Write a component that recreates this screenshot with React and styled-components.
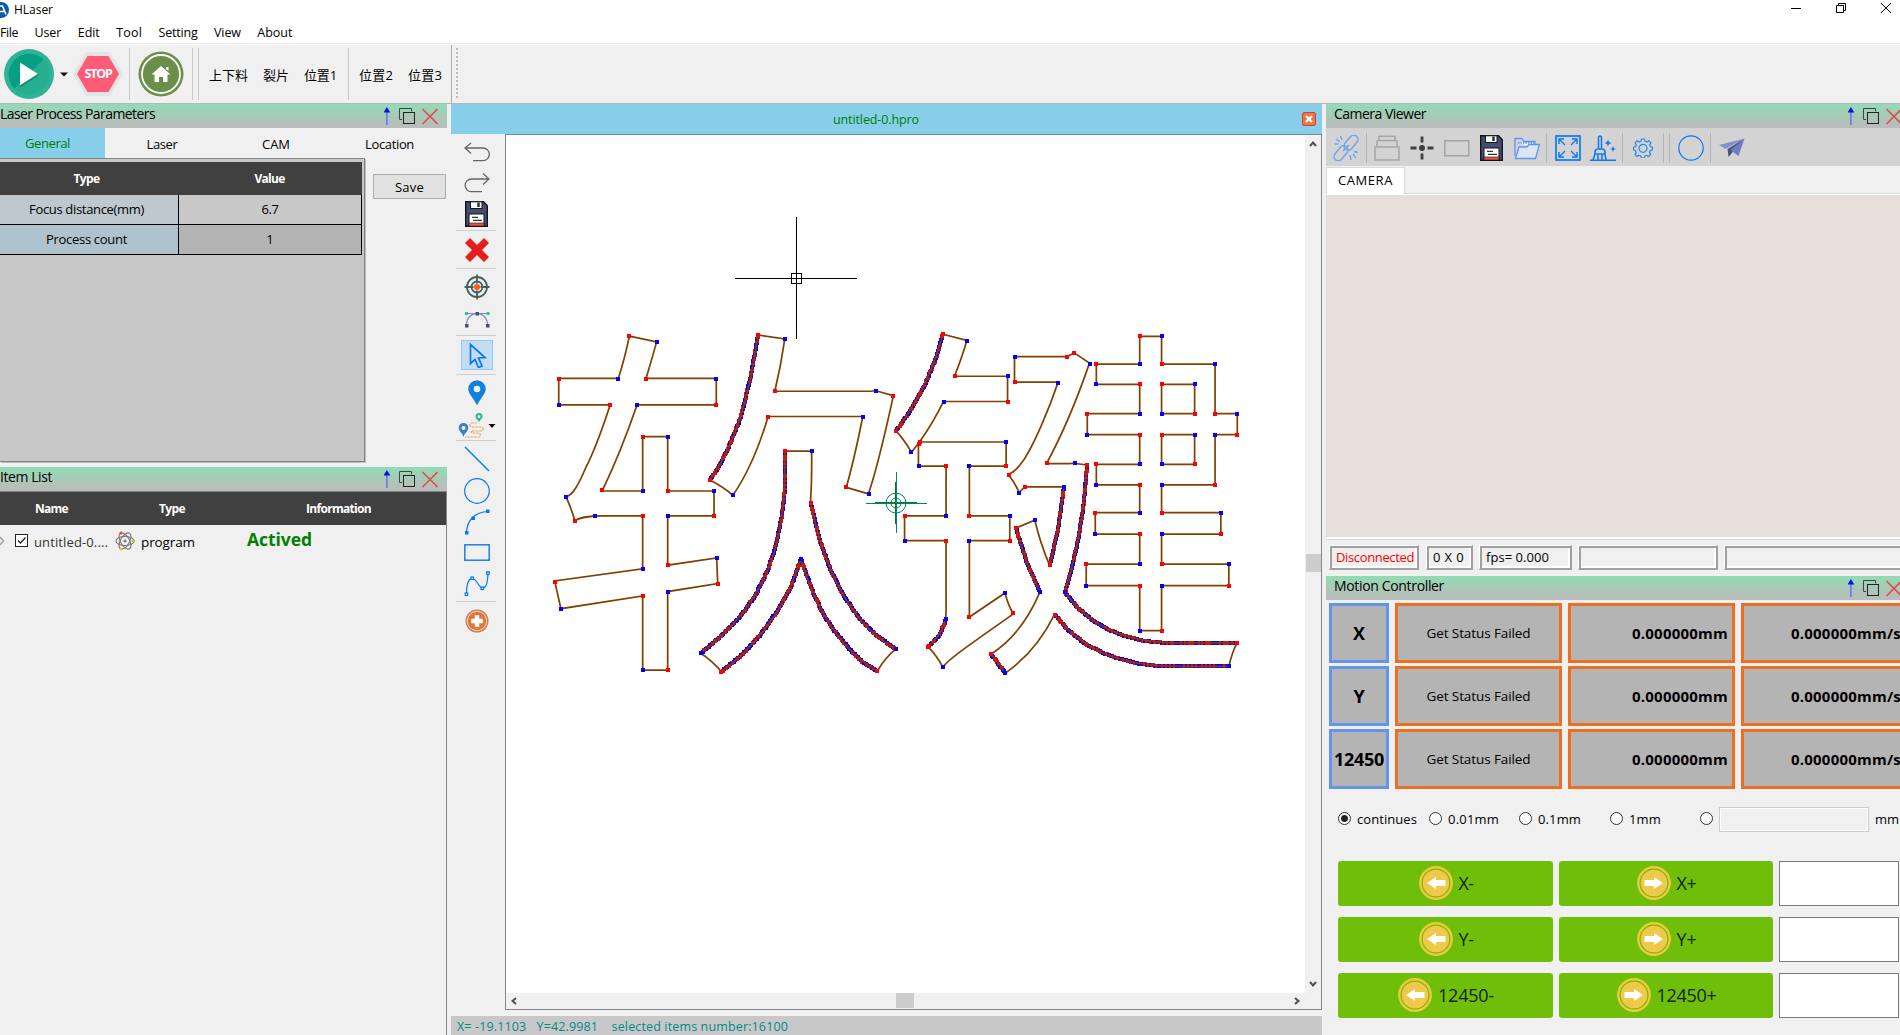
import React, { useLayoutEffect, useRef, useState } from "react";
import styled, { createGlobalStyle, css } from "styled-components";

const Global = createGlobalStyle`
  * { box-sizing: border-box; }
  body { margin: 0; background: #f0f0f0; overflow: hidden; }
  #root { font-family: "Open Sans", "Noto Sans CJK SC", sans-serif; color: #000; }
  svg { display: block; flex: none; }
`;

/* ---------- text ---------- */

const Label = styled.span`
  display: inline-block;
  flex: none;
  white-space: pre;
  font-size: ${(p) => p.$size || 13}px;
  font-weight: ${(p) => (p.$bold ? 700 : 400)};
  color: ${(p) => p.$color || "inherit"};
  line-height: 1.3;
`;

/* Spreads the letters so that the label fills the given width. */
function T({ w, size, bold, color, children }) {
  const ref = useRef(null);
  const [spacing, setSpacing] = useState(0);
  useLayoutEffect(() => {
    if (!w) return;
    const natural = ref.current.getBoundingClientRect().width;
    setSpacing((w - natural) / children.length);
  }, []);
  return (
    <Label ref={ref} $size={size} $bold={bold} $color={color} style={{ letterSpacing: spacing }}>
      {children}
    </Label>
  );
}

/* ---------- frame ---------- */

const Window = styled.div`
  width: 1900px;
  height: 1035px;
  display: flex;
  flex-direction: column;
  overflow: hidden;
  background: #f0f0f0;
`;

const TitleBar = styled.header`
  height: 20px;
  flex: none;
  background: #fff;
  display: flex;
  align-items: center;
  gap: 5px;
`;

const Spacer = styled.div`
  flex: 1;
`;

const WindowButtons = styled.div`
  display: flex;
  align-items: center;
  gap: 35px;
  padding: 0 9px 4px 0;
`;

const MenuBar = styled.nav`
  height: 24px;
  flex: none;
  background: #fff;
  border-bottom: 1px solid #e9e9e9;
  display: flex;
  align-items: center;
  gap: 16.4px;
  padding-top: 3px;
`;

const MainToolbar = styled.div`
  height: 60px;
  flex: none;
  border-top: 1px solid #fcfcfc;
  border-bottom: 1px solid #b8b8b8;
  display: flex;
  align-items: center;
`;

const Actions = styled.div`
  width: 452px;
  height: 59px;
  border-right: 1px solid #a9a9a9;
  display: flex;
  align-items: center;
`;

const ToolItem = styled.div`
  margin-left: ${(p) => p.$gap}px;
  flex: none;
`;

const VLine = styled.i`
  flex: none;
  width: 1px;
  height: ${(p) => p.$h || 52}px;
  margin-left: ${(p) => p.$gap || 0}px;
  background: ${(p) => (p.$h ? "#b4b4b4" : "#c9c9c9")};
`;

const Grip = styled.i`
  width: 2px;
  height: 52px;
  margin-left: 4px;
  background: repeating-linear-gradient(#bdbdbd 0 2px, transparent 2px 4px);
`;

const Body = styled.main`
  flex: 1;
  min-height: 0;
  display: grid;
  grid-template-columns: 447px 871px 585px;
  column-gap: 4px;
`;

const Column = styled.section`
  display: flex;
  flex-direction: column;
  min-height: 0;
`;

const DockHeader = styled.div`
  height: 24px;
  flex: none;
  display: flex;
  align-items: center;
  padding: 0 9px 0 ${(p) => p.$pad || 0}px;
  background: linear-gradient(#8fdcb5, #a9c9b6 50%, #bbb);
  & > span { margin-top: -4px; }
`;

/* ---------- laser process parameters ---------- */

const Tabs = styled.div`
  display: flex;
  height: 30px;
  flex: none;
`;

const Tab = styled.div`
  width: ${(p) => p.$w}px;
  display: flex;
  align-items: center;
  justify-content: center;
  background: ${(p) => (p.$on ? "#87ceeb" : "transparent")};
  color: ${(p) => (p.$on ? "#008000" : "#000")};
  padding: ${(p) => (p.$on ? "0 10px 0 0" : "2px 0 0 1px")};
`;

const ParamsBody = styled.div`
  display: flex;
  height: 309px;
  flex: none;
  align-items: flex-start;
`;

const ParamsFrame = styled.div`
  width: 365px;
  height: 304px;
  background: #c8c8c8;
  border: solid #838383;
  border-width: 1px 1px 1px 0;
  box-shadow: 1px 1px 0 #c0c0c0;
  padding: 3px 2px 0 0;
`;

const HeadRow = styled.div`
  height: ${(p) => p.$h}px;
  display: grid;
  grid-template-columns: ${(p) => p.$cols};
  background: #404040;
  color: #fff;
  align-items: center;
  justify-items: center;
`;

const ParamRow = styled.div`
  display: grid;
  grid-template-columns: 179px 183px;
  height: 30px;
`;

const ParamCell = styled.div`
  display: flex;
  align-items: center;
  justify-content: center;
  background: ${(p) => p.$bg};
  border-right: 1px solid #000;
  border-bottom: 1px solid #000;
  padding-right: ${(p) => (p.$head ? 5 : 0)}px;
`;

const SaveButton = styled.button`
  width: 73px;
  height: 25px;
  margin: 16px 0 0 8px;
  border: 1px solid #adadad;
  background: #e1e1e1;
  padding: 1px 0 0 0;
  font-family: inherit;
  color: #000;
  display: flex;
  align-items: center;
  justify-content: center;
`;

/* ---------- item list ---------- */

const ItemTable = styled.div`
  flex: 1;
  border-top: 1px solid #828790;
  border-right: 1px solid #828790;
`;

const ItemRow = styled.div`
  height: 31px;
  display: flex;
  align-items: center;
  overflow: hidden;
`;

const ItemCell = styled.div`
  margin-left: ${(p) => p.$gap}px;
  margin-top: ${(p) => p.$dy || 0}px;
  flex: none;
`;

/* ---------- document ---------- */

const DocTab = styled.div`
  height: 30px;
  flex: none;
  background: #87ceeb;
  display: grid;
  grid-template-columns: 850px 16px;
  align-items: center;
  justify-items: center;
  & > span { padding-top: 2px; }
`;

const DocBody = styled.div`
  flex: 1;
  display: grid;
  grid-template-columns: 54px 817px;
  min-height: 0;
`;

const SideTools = styled.div`
  display: flex;
  flex-direction: column;
`;

const SideCell = styled.div`
  height: ${(p) => p.$h}px;
  width: 51px;
  flex: none;
  display: flex;
  align-items: center;
  justify-content: center;
`;

const SideLine = styled.i`
  height: 1px;
  width: 40px;
  margin-left: 5px;
  flex: none;
  background: #cfcfcf;
`;

const ActiveTool = styled.div`
  width: 32px;
  height: 30px;
  border: 1px solid #90c8f6;
  background: #c2dcf2;
  display: flex;
  align-items: center;
  justify-content: center;
`;

const CanvasFrame = styled.div`
  height: 876px;
  border: 1px solid #828790;
  display: grid;
  grid-template-columns: 799px 16px;
  grid-template-rows: 858px 16px;
  background: #f0f0f0;
`;

const Sheet = styled.div`
  background: #fff;
  overflow: hidden;
`;

const Scroll = styled.div`
  background: #f0f0f0;
  display: flex;
  flex-direction: ${(p) => (p.$vertical ? "column" : "row")};
  align-items: center;
  padding: ${(p) => (p.$vertical ? "5px 0" : "0 4px 1px")};
`;

const Thumb = styled.i`
  background: #cdcdcd;
  ${(p) =>
    p.$vertical
      ? css`width: 15px; height: 18px; margin-top: 406px;`
      : css`height: 15px; width: 18px; margin-left: 378px;`}
`;

const StatusLine = styled.footer`
  height: 19px;
  flex: none;
  margin-top: auto;
  background: #c8c8c8;
  display: flex;
  align-items: center;
  padding: 3px 0 0 6px;
  overflow: hidden;
`;

/* ---------- camera ---------- */

const CameraBar = styled.div`
  height: 38px;
  flex: none;
  background: #d3d3d3;
  display: flex;
  align-items: center;
  padding-top: 2px;
`;

const CameraTabs = styled.div`
  height: 28px;
  flex: none;
  padding-top: 1px;
  display: flex;
  border-bottom: 1px solid #d9d9d9;
`;

const CameraTab = styled.div`
  width: 79px;
  height: 28px;
  border: 1px solid #d9d9d9;
  border-bottom: none;
  background: #fff;
  display: flex;
  align-items: center;
  justify-content: center;
  padding-bottom: 2px;
  flex: none;
`;

const CameraView = styled.div`
  height: 345px;
  flex: none;
  border: 1px solid #fff;
  border-bottom-width: 2px;
  border-left-color: #d9d9d9;
  box-shadow: 0 1px 0 #d9d9d9;
  background: #e8dfdb;
`;

const StatusFields = styled.div`
  height: 37px;
  flex: none;
  display: flex;
  align-items: flex-start;
  padding: 6px 0 0 3px;
`;

const Field = styled.div`
  width: ${(p) => p.$w}px;
  height: 25px;
  margin-right: ${(p) => p.$gap}px;
  flex: none;
  border: 2px solid #a0a0a0;
  border-color: #fff #a0a0a0 #a0a0a0 #fff;
  border-width: 1px 2px 2px 1px;
  box-shadow: inset 2px 2px 0 #a0a0a0, inset -2px -2px 0 #fff;
  display: flex;
  align-items: center;
  padding-left: 6px;
`;

/* ---------- motion ---------- */

const AxisGrid = styled.div`
  display: grid;
  grid-template-columns: 60px 167px 167px 167px;
  grid-auto-rows: 60px;
  gap: 3px 6px;
  padding: 3px 0 0 3px;
`;

const AxisCell = styled.div`
  background: #b4b4b4;
  border: 3px solid ${(p) => (p.$axis ? "#6495ed" : "#ed6f22")};
  display: flex;
  align-items: center;
  justify-content: ${(p) => (p.$right ? "flex-end" : "center")};
  padding: 1px ${(p) => (p.$right ? 4 : 0)}px 0 0;
`;

const StepRow = styled.div`
  display: flex;
  align-items: center;
  height: 26px;
  margin: 17px 0 29px;
`;

const Radio = styled.i`
  width: 13px;
  height: 13px;
  flex: none;
  margin: 0 ${(p) => p.$after || 6}px 2px ${(p) => p.$gap}px;
  border: 1px solid #333;
  border-radius: 50%;
  background: ${(p) => (p.$on ? "radial-gradient(circle, #222 0 3px, #fff 4px)" : "#fff")};
`;

const StepInput = styled.div`
  width: 150px;
  height: 25px;
  flex: none;
  border: 1px solid #ccc;
  box-shadow: inset 0 0 0 1px #fff;
  margin-right: 6px;
`;

const JogGrid = styled.div`
  display: grid;
  grid-template-columns: 215px 214px 120px;
  grid-auto-rows: 45px;
  gap: 11px 6px;
  padding-left: 12px;
`;

const JogButton = styled.button`
  border: 0;
  border-radius: 3px;
  background: #6fbf0a;
  font-family: inherit;
  display: flex;
  align-items: center;
  justify-content: center;
  gap: 6px;
  padding: 0 0 1px 1px;
  color: #14240a;
  & > span { padding-top: 2px; }
`;

const JogInput = styled.div`
  border: 1px solid #7a7a7a;
  background: #fff;
`;

/* ---------- icons ---------- */

const BLUE = "#0a78f0";

const Floppy = () => (
  <svg width="23" height="26" viewBox="0 0 23 26">
    <path d="M.7 .8h17.800l3.800 4V25.200H.7Z" fill="#464e6e" stroke="#15151c" strokeWidth="1.400" />
    <rect x="5.500" y=".8" width="11.500" height="6.700" fill="#fff" stroke="#15151c" />
    <rect x="12.300" y="1.500" width="2.400" height="4.500" fill="#23273a" />
    <rect x="4" y="13" width="15" height="12" fill="#fff" stroke="#15151c" />
    <path d="M7 16.300h6M8 19.300h9" stroke="#333" strokeWidth="1.200" />
    <rect x="4" y="22" width="15" height="3" fill="#ef5340" stroke="#15151c" strokeWidth=".6" />
  </svg>
);

const DockButtons = () => (
  <svg width="54" height="20" viewBox="0 0 54 20">
    <path d="M2.900 5v14" stroke="#6e74ee" strokeWidth="1.600" />
    <path d="M-.5 6.500 2.900 1l3.400 5.500Z" fill="#0d0df0" />
    <path d="M18 13.500h-2.500V2.500h12v3" fill="none" stroke="#444" />
    <rect x="19.500" y="6.500" width="11" height="11" fill="none" stroke="#222" />
    <path d="M38.500 3l15 15M53.500 3l-15 15" stroke="#e04f4f" strokeWidth="1.600" />
  </svg>
);

const Dock = ({ title, w, pad }) => (
  <DockHeader $pad={pad}>
    <T size={14} w={w}>{title}</T>
    <Spacer />
    <DockButtons />
  </DockHeader>
);

const Caret = () => (
  <svg width="8" height="5" viewBox="0 0 8 5"><path d="M0 .5h8L4 4.500Z" fill="#111" /></svg>
);

const Chevron = ({ r }) => (
  <svg width="8" height="8" viewBox="0 0 8 8">
    <path d="M1 6l3-3.500 3 3.500" fill="none" stroke="#505050" strokeWidth="2" transform={`rotate(${r} 4 4)`} />
  </svg>
);

const JogArrow = ({ right }) => (
  <svg width="34" height="34" viewBox="0 0 34 34">
    <circle cx="17" cy="17" r="15.700" fill="#6fbf0a" stroke="#f0c73e" strokeWidth="2.400" />
    <circle cx="17" cy="17" r="13.300" fill="#f0c84a" />
    <path
      d="M8 17l9-6v3h9.500v6H17V23Z"
      fill="#fff"
      transform={right ? "rotate(180 17 17)" : undefined}
    />
  </svg>
);

const Play = () => (
  <svg width="50" height="50" viewBox="0 0 50 50">
    <circle cx="25" cy="25" r="25" fill="#2fb296" />
    <path d="M10.300 39.700A20.800 20.800 0 0 1 39.700 10.300Z" fill="#03a084" />
    <path d="M10.300 39.700A20.800 20.800 0 0 0 39.700 10.300Z" fill="#27ae91" />
    <path d="M16 13.500 34 25 16 36.500Z" fill="#fff" />
    <path d="M16 36.500 34 25l1 1L17 38Z" fill="#0c8b72" />
  </svg>
);

const StopLabel = styled.div`
  width: 50px;
  height: 44px;
  display: grid;
  place-items: center;
  & > * { grid-area: 1 / 1; }
`;

const Stop = () => (
  <StopLabel>
    <svg width="50" height="44" viewBox="0 0 50 44">
      <path d="M13.500 1h23L49 22 36.500 43h-23L1 22Z" fill="#e4e4e4" stroke="#e4e4e4" strokeWidth="2" strokeLinejoin="round" />
      <path d="M14.500 4h21L46 22 35.500 40h-21L4 22Z" fill="#ff5a76" />
    </svg>
    <T size={12.500} bold w={27} color="#fff">STOP</T>
  </StopLabel>
);

const Home = () => (
  <svg width="46" height="46" viewBox="0 0 46 46">
    <circle cx="23" cy="23" r="22.500" fill="#6b8e4b" />
    <circle cx="23" cy="23" r="19" fill="none" stroke="#fff" strokeWidth="1.800" />
    <path d="M23 15 13.500 23.500h3V31h4.500v-5h4v5h4.500v-7.500h3Z" fill="#fff" />
    <path d="M28 16h2.500v4L28 18Z" fill="#fff" />
  </svg>
);

const Line = ({ w = 26, h = 26, children, stroke = BLUE, sw = 1.2 }) => (
  <svg width={w} height={h} viewBox={`0 0 ${w} ${h}`} fill="none" stroke={stroke} strokeWidth={sw}>
    {children}
  </svg>
);

const sideTools = [
  [35, <Line stroke="#666" sw={1.300}><path d="M7 4 1 9l6 5.500M1 9h18a6.300 6.300 0 0 1 0 12.700H9" /></Line>],
  [28, <Line stroke="#666" sw={1.300}><path d="M19 3.500l6 5.500-6 5.500M25 9H7.500a6.300 6.300 0 0 0 0 12.700H18" /></Line>],
  [33, <Floppy />],
  null,
  [37, <svg width="26" height="26" viewBox="0 0 26 26"><path d="M6 1l7 7 7-7 5 5-7 7 7 7-5 5-7-7-7 7-5-5 7-7-7-7Z" fill="#e81c1c" /></svg>],
  null,
  [36, (
    <Line stroke="#43605f" sw={1.800}>
      <circle cx="13" cy="13" r="10" /><circle cx="13" cy="13" r="5.500" />
      <path d="M13 .5v9M13 16.500v9M.5 13h9M16.500 13h9" />
      <circle cx="13" cy="13" r="3" fill="#ff5a14" stroke="none" />
    </Line>
  )],
  [30, (
    <Line h={20} stroke="#8189c4">
      <path d="M2 3.500h22M2.500 15C3 -.5 23 -.5 23.500 15" />
      <g stroke="none" fill="#464e78"><rect x="11.500" y="2" width="3.500" height="3.500" /><rect x="1" y="14" width="3.500" height="3.500" /><rect x="22" y="14" width="3.500" height="3.500" /></g>
      <g stroke="none" fill="#2fc09a"><circle cx="2.500" cy="3.500" r="1.800" /><circle cx="24" cy="3.500" r="1.800" /></g>
    </Line>
  )],
  null,
  [38, (
    <ActiveTool>
      <Line sw={1.700}><path d="M6.500 2.500v19l4.500-4 3.500 8 3.500-1.500-3.500-8 6.500-.5Z" /></Line>
    </ActiveTool>
  )],
  null,
  [36, (
    <svg width="18" height="26" viewBox="0 0 18 26"><path d="M9 25.500C7 20 .3 14 .3 9a8.700 8.700 0 0 1 17.400 0c0 5-6.700 11-8.700 16.500ZM9 5.700a3.300 3.300 0 1 0 0 6.600 3.300 3.300 0 0 0 0-6.600Z" fill="#1280e0" /></svg>
  )],
  [29, (
    <svg width="38" height="26" viewBox="0 0 38 26">
      <path d="M5.500 24C4.500 20 .7 18 .7 14.700a4.800 4.800 0 0 1 9.600 0C10.300 18 6.500 20 5.500 24Z" fill="#3880c8" />
      <circle cx="5.500" cy="15" r="2" fill="#f0f0f0" />
      <path d="M21 9.500c-.7-2.700-3.500-3.500-3.500-6a3.500 3.500 0 0 1 7 0c0 2.500-2.800 3.300-3.500 6Z" fill="#2dbb96" />
      <circle cx="21" cy="3.700" r="1.400" fill="#f0f0f0" />
      <path d="M19 10h-5q-2 0-2 2t2 2h9q2 0 2 2t-2 2h-8q-2 0-2 2M15 18q-2 0-1 2h7q2 1 1 4H7" fill="none" stroke="#efa24c" strokeWidth="1.200" strokeDasharray="2.500 1" />
      <path d="M30.500 11h7l-3.500 4Z" fill="#111" />
    </svg>
  )],
  null,
  [36, <Line sw={1.500}><path d="M1 1l24 24" /></Line>],
  [28, <Line><circle cx="13" cy="13" r="12.300" /></Line>],
  [33, (
    <Line><path d="M2.500 23.500C3 11 11 3 24 2.500" /><g fill={BLUE} stroke="none"><rect x="1" y="22" width="3.500" height="3.500" /><rect x="7.500" y="7.500" width="3.500" height="3.500" /><rect x="22" y=".5" width="3.500" height="3.500" /></g></Line>
  )],
  [29, <Line h={17} sw={1.400}><rect x=".8" y=".8" width="24.400" height="15.400" /></Line>],
  [34, (
    <Line>
      <path d="M2.500 23C2.500 12 5 7 8.500 7.500c4.500.5 6 9 10 9.500 4 .3 5-6 5.500-14" />
      <g fill="#f0f0f0"><rect x="1.200" y="22" width="2.500" height="2.500" /><rect x="7" y="6" width="2.500" height="2.500" /><rect x="17" y="16" width="2.500" height="2.500" /><rect x="22.700" y=".7" width="2.500" height="2.500" /></g>
    </Line>
  )],
  null,
  [37, (
    <svg width="24" height="24" viewBox="0 0 24 24">
      <circle cx="12" cy="12" r="11.500" fill="#d97b40" /><circle cx="12" cy="12" r="9.700" fill="none" stroke="#f3e3d8" strokeWidth=".9" />
      <path d="M9.800 6.200h4.400v3.600h3.600v4.400h-3.600v3.600H9.800v-3.600H6.200V9.800h3.600Z" fill="#fff" />
    </svg>
  )],
];

const cameraTools = [
  [7, (
    <Line stroke="#6fa3f0" sw={1.400}>
      <rect x="9.500" y="3.500" width="17" height="8.500" rx="4.250" transform="rotate(-50 18 7.750)" />
      <rect x="-.5" y="14" width="17" height="8.500" rx="4.250" transform="rotate(-50 8 18.250)" />
      <path d="M10 16l6-6M7.500 1l1.500 4M3 4l4 3M1.500 9h4M17 20l1 5M20 19l3 4M21 16.500l4 1" />
    </Line>
  )],
  7,
  [7, <Line stroke="#a6a6a6" sw={1.500}><path d="M1 12h24v13H1ZM3 11V6.500q0-1 1-1h18q1 0 1 1V11M5 5V1.200h16V5" /></Line>],
  [10, (
    <svg width="24" height="24" viewBox="0 0 24 24"><path d="M12 .5v6M12 17.500v6M.5 12h6M17.500 12h6" stroke="#404040" strokeWidth="2.800" /><circle cx="12" cy="12" r="3" fill="#404040" /></svg>
  )],
  [10, <Line h={17} stroke="#a6a6a6" sw={1.600}><rect x=".8" y=".8" width="24" height="15" /></Line>],
  [10, <Floppy />],
  [11, (
    <Line stroke="#5c97f5" sw={1.300} h={24}>
      <path d="M1 20V2.500h7l2 3h11v3" /><path d="M4 7h17v4" fill="#fff" strokeDasharray="1.500 1" />
      <path d="M1.500 22.500 5 11h8l2-2.500h10.500l-4 14Z" fill="#dfe4f2" />
    </Line>
  )],
  6,
  [8, (
    <Line sw={1.700}>
      <rect x="1" y="1" width="24" height="24" />
      <path d="M4 9V4h5M4 4l6 6M17 4h5v5M22 4l-6 6M4 17v5h5M4 22l6-6M22 17v5h-5M22 22l-6-6" strokeWidth="1.400" />
    </Line>
  )],
  [9, (
    <Line sw={1.500}>
      <path d="M8.500 14V3q0-2 1.500-2t1.500 2v11M5 17q0-3 3-3h4q3 0 3 3v2H5ZM5 19l-2 6M15 19l1 6M8 20v5M12 20v5M0 25.300h26" />
      <path d="M18 4.500l1 2.500 2.500 1-2.500 1-1 2.500-1-2.500-2.500-1L17 7ZM23 11l.8 2.200 2.200.8-2.200.8L23 17l-.8-2.200L20 14l2.200-.8Z" fill={BLUE} stroke="none" />
    </Line>
  )],
  6,
  [10, (
    <Line w={20} h={20} sw={1.200} stroke="#2a86ee">
      <path d="M8.500 1h3l.6 2.300 1.600.7 2.200-1.200 2 2.100-1.200 2 .7 1.700 2 .7v2.700l-2.200.7-.7 1.600 1.200 2.100-2 2-2-1.100-1.700.7-.6 2.200h-3l-.6-2.200-1.600-.7-2.100 1.100-2-2 1.100-2.100L2.600 12.700.5 12V9.300l2.200-.7.6-1.700-1.100-2 2-2.100L6.300 4l1.600-.7Z" />
      <circle cx="10" cy="10.300" r="4" />
    </Line>
  )],
  10,
  5,
  [8, <Line><circle cx="13" cy="13" r="12.200" /></Line>],
  6,
  [8, (
    <svg width="26" height="20" viewBox="0 0 26 20"><path d="M25.500.5 0 7l6.500 4Z" fill="#8490cc" /><path d="M25.500.5 8.500 11l1 8Z" fill="#4a5478" /><path d="M25.500.5 11.500 12 19.500 18Z" fill="#6f7cc0" /></svg>
  )],
];

/* ---------- drawing ---------- */

const ArtText = styled.text`
  font-family: "Noto Sans CJK SC", sans-serif;
  font-weight: 400;
  font-size: 364px;
  fill: none;
  stroke: #804000;
  stroke-width: 1.7;
`;

const parse = (s) => s.split(" ").map((p) => p.split(",").map(Number));

/* Finely sampled runs of the work piece: a sample every two pixels. */
const RUNS = [
  "710,480 719,466 727,451 741,417 751,375 758,335",
  "785,451 785,488 782,515 776,545 768,570 755,596 740,617 722,635 701,653",
  "811,503 819,538 831,571 844,596 859,618 877,636 896,649",
  "801,559 791,587 778,610 761,634 743,654 721,672",
  "801,559 814,595 824,615 833,629 853,653 864,663 877,671",
  "896,431 910,411 925,385 936,358 943,334",
  "946,619 940,634 935,640 928,647",
  "1064,487 1058,529 1050,565",
  "1087,465 1084,502 1079,535 1072,568 1065,592 1076,606 1092,620 1109,630 1128,637 1145,641 1168,643 1237,643",
  "1016,528 1027,563 1040,592",
  "1055,615 1069,631 1084,643 1103,653 1120,659 1141,664 1159,666 1229,666",
  "991,654 1005,673",
].map(parse);

/* Single nodes where two straight segments meet. */
const NODES = [
  "758,335 785,339 775,391 876,391 893,396 869,494 846,487 863,417 768,417 733,495 710,480",
  "629,336 657,342 646,379 716,379 716,405 637,405 602,490 643,491 643,437 668,437 668,491 714,491 714,516 668,516 668,565 717,558 718,584 668,592 668,670 643,670 643,596 561,609 555,582 643,569 643,516 595,516 575,521 566,497 610,405 559,405 559,379 618,379",
  "785,451 812,451 811,503 896,649 877,671 801,559 721,672 701,653",
  "943,334 967,341 955,376 1008,376 1008,402 944,402 920,442 1006,442 1006,466 969,466 969,516 1010,516 1010,541 969,541 969,617 1005,593 1013,613 943,667 928,647 946,619 946,541 905,541 905,516 946,516 946,466 919,466 919,444 911,452 896,431",
  "1140,336 1162,336 1162,364 1215,364 1215,414 1237,414 1237,435 1215,435 1215,485 1162,485 1162,513 1221,513 1221,534 1162,534 1162,564 1229,564 1229,586 1162,586 1162,631 1140,631 1140,586 1086,586 1086,564 1140,564 1140,534 1095,534 1095,513 1140,513 1140,485 1096,485 1096,464 1140,464 1140,435 1087,435 1087,414 1140,414 1140,384 1096,384 1096,364 1140,364",
  "1074,353 1090,364 1047,463 1075,463 1087,465 1065,592 1237,643 1229,666 1055,615 1005,673 991,654 1040,592 1016,528 1035,520 1050,565 1064,487 1025,487 1019,493 1009,475 1058,383 1015,382 1015,357 1067,357",
  "1162,384 1162,414 1195,414 1195,384",
  "1162,435 1162,464 1195,464 1195,435",
].map(parse);

const RED = "#f00";
const NAVY = "#00f";

function sample(run) {
  const out = [];
  for (let i = 0; i + 1 < run.length; i++) {
    const [x1, y1] = run[i];
    const [x2, y2] = run[i + 1];
    const n = Math.max(1, Math.round(Math.hypot(x2 - x1, y2 - y1) / 2));
    for (let k = 0; k < n; k++) out.push([x1 + ((x2 - x1) * k) / n, y1 + ((y2 - y1) * k) / n]);
  }
  return out;
}

const Node = ({ x, y, s, fill }) => <rect x={Math.round(x - s / 2)} y={Math.round(y - s / 2)} width={s} height={s} fill={fill} />;

const Drawing = () => (
  <svg width="799" height="858" viewBox="506 135 799 858">
    <g stroke="#000"><path d="M735 278.500h122M796.500 217v122" /><rect x="791.500" y="273.500" width="10" height="10" fill="none" /></g>
    <g fill="none" stroke="#008080">
      <path d="M866 503.500h61M896.500 472v61" />
      <circle cx="896" cy="503" r="10" /><circle cx="896" cy="503" r="5" />
    </g>
    <path d="M875 502.500h42M895.500 482v42" stroke="#008000" />
    <g shapeRendering="crispEdges">
      {RUNS.map((run, r) =>
        sample(run).map(([x, y], i) => <Node key={r + "-" + i} x={x} y={y} s={4} fill={(i * 7 + (i >> 2)) % 5 < 2 || i % 9 === 4 ? RED : NAVY} />)
      )}
    </g>
    <ArtText transform="translate(540.3 642.3) scale(1.0115 1.004)">软</ArtText>
    <ArtText transform="translate(886 642.3) scale(1 1.004)">键</ArtText>
    <g shapeRendering="crispEdges">
      {NODES.map((list, r) => list.map(([x, y], i) => <Node key={r + "-" + i} x={x} y={y} s={4} fill={i % 2 ? NAVY : RED} />))}
    </g>
  </svg>
);

/* ---------- app ---------- */

const axes = ["X", "Y", "12450"];

export default function App() {
  return (
    <Window>
      <Global />
      <TitleBar>
        <svg width="9" height="16" viewBox="0 0 9 16"><circle cx="1" cy="8" r="8" fill="#0a5aa8" /><path d="M0 4h2.500L6 12.500M0 9.500h4" stroke="#fff" strokeWidth="1.600" fill="none" /></svg>
        <T size={12} w={39}>HLaser</T>
        <Spacer />
        <WindowButtons>
          <svg width="10" height="10"><path d="M0 5.500h10" stroke="#000" /></svg>
          <svg width="10" height="10" fill="none" stroke="#000"><path d="M.5 2.500h7v7h-7ZM2.500 2V.5h7v7H8" /></svg>
          <svg width="10" height="10" stroke="#000"><path d="M0 0l10 10M10 0 0 10" /></svg>
        </WindowButtons>
      </TitleBar>
      <MenuBar>
        {[["File", 18], ["User", 27], ["Edit", 22], ["Tool", 26], ["Setting", 39], ["View", 27], ["About", 35]].map(([m, w]) => (
          <T key={m} size={12.500} w={w}>{m}</T>
        ))}
      </MenuBar>
      <MainToolbar>
        <Actions>
          <ToolItem $gap={4}><Play /></ToolItem>
          <ToolItem $gap={6}><Caret /></ToolItem>
          <ToolItem $gap={5}><Stop /></ToolItem>
          <VLine $gap={6} />
          <ToolItem $gap={8}><Home /></ToolItem>
          <VLine $gap={8} />
          <VLine $gap={5} />
          <ToolItem $gap={10}><T size={13} w={39}>上下料</T></ToolItem>
          <ToolItem $gap={15}><T size={13} w={26}>裂片</T></ToolItem>
          <ToolItem $gap={15}><T size={13} w={33}>位置1</T></ToolItem>
          <VLine $gap={11} />
          <ToolItem $gap={10}><T size={13} w={34}>位置2</T></ToolItem>
          <ToolItem $gap={15}><T size={13} w={34}>位置3</T></ToolItem>
        </Actions>
        <Grip />
      </MainToolbar>
      <Body>
        <Column>
          <Dock title="Laser Process Parameters" w={155} />
          <Tabs>
            <Tab $on $w={105}><T w={45}>General</T></Tab>
            <Tab $w={113}><T w={31}>Laser</T></Tab>
            <Tab $w={115}><T w={28}>CAM</T></Tab>
            <Tab $w={112}><T w={49}>Location</T></Tab>
          </Tabs>
          <ParamsBody>
            <ParamsFrame>
              <HeadRow $h={33} $cols="173px 193px">
                <T size={12} bold w={26}>Type</T>
                <T size={12} bold w={30}>Value</T>
              </HeadRow>
              <ParamRow>
                <ParamCell $head $bg="#bec8ce"><T w={115}>Focus distance(mm)</T></ParamCell>
                <ParamCell $bg="#c8c8c8"><T w={17}>6.7</T></ParamCell>
              </ParamRow>
              <ParamRow>
                <ParamCell $head $bg="#afc3cf"><T w={81}>Process count</T></ParamCell>
                <ParamCell $bg="#b4b4b4"><T>1</T></ParamCell>
              </ParamRow>
            </ParamsFrame>
            <SaveButton><T w={29}>Save</T></SaveButton>
          </ParamsBody>
          <Dock title="Item List" w={52} />
          <ItemTable>
            <HeadRow $h={33} $cols="103px 138px 195px">
              <T size={12} bold w={33}>Name</T>
              <T size={12} bold w={26}>Type</T>
              <T size={12} bold w={65}>Information</T>
            </HeadRow>
            <ItemRow>
              <ItemCell $gap={0}><svg width="5" height="10"><path d="M0 1l3.500 4L0 9" stroke="#a0a0a0" strokeWidth="1.500" fill="none" /></svg></ItemCell>
              <ItemCell $gap={10}><svg width="13" height="13"><rect x=".5" y=".5" width="12" height="12" fill="#fff" stroke="#222" /><path d="M3 6.500 5.500 9 10.500 3.500" stroke="#222" strokeWidth="1.300" fill="none" /></svg></ItemCell>
              <ItemCell $gap={6}><T w={74} color="#333">untitled-0....</T></ItemCell>
              <ItemCell $gap={7}>
                <svg width="20" height="20" viewBox="0 0 20 20" fill="none" stroke="#7c7c7c" strokeWidth="1.200">
                  <ellipse cx="10" cy="10" rx="9" ry="4.500" /><ellipse cx="10" cy="10" rx="9" ry="4.500" transform="rotate(60 10 10)" /><ellipse cx="10" cy="10" rx="9" ry="4.500" transform="rotate(120 10 10)" />
                  <circle cx="10" cy="10" r="1.500" fill="#777" stroke="none" /><circle cx="6" cy="2" r="1.600" fill="#e04a3a" stroke="none" /><circle cx="18.500" cy="10" r="1.600" fill="#9ccc4a" stroke="none" /><circle cx="6" cy="18" r="1.600" fill="#f0c020" stroke="none" />
                </svg>
              </ItemCell>
              <ItemCell $gap={6} $dy={1}><T size={13.500} w={54}>program</T></ItemCell>
              <ItemCell $gap={52} $dy={-3}><T size={17.500} bold w={65} color="#008000">Actived</T></ItemCell>
            </ItemRow>
          </ItemTable>
        </Column>

        <Column>
          <DocTab>
            <T size={12.500} w={86} color="#008000">untitled-0.hpro</T>
            <svg width="14" height="14" viewBox="0 0 14 14"><rect x=".5" y=".5" width="13" height="13" rx="1.500" fill="#e8784a" stroke="#d8402a" /><path d="M4 4l6 6M10 4l-6 6" stroke="#fff" strokeWidth="2.200" /></svg>
          </DocTab>
          <DocBody>
            <SideTools>
              {sideTools.map((t, i) => (t ? <SideCell key={i} $h={t[0]}>{t[1]}</SideCell> : <SideLine key={i} />))}
            </SideTools>
            <CanvasFrame>
              <Sheet><Drawing /></Sheet>
              <Scroll $vertical>
                <Chevron r={0} />
                <Thumb $vertical />
                <Spacer />
                <Chevron r={180} />
              </Scroll>
              <Scroll>
                <Chevron r={270} />
                <Thumb />
                <Spacer />
                <Chevron r={90} />
              </Scroll>
            </CanvasFrame>
          </DocBody>
          <StatusLine>
            <T size={12.500} w={331} color="#008b8b">{"X= -19.1103   Y=42.9981    selected items number:16100"}</T>
          </StatusLine>
        </Column>

        <Column>
          <Dock title="Camera Viewer" w={92} pad={8} />
          <CameraBar>
            {cameraTools.map((t, i) =>
              typeof t === "number" ? <VLine key={i} $gap={t} $h={30} /> : <ToolItem key={i} $gap={t[0]}>{t[1]}</ToolItem>
            )}
          </CameraBar>
          <CameraTabs>
            <CameraTab><T w={55}>CAMERA</T></CameraTab>
          </CameraTabs>
          <CameraView />
          <StatusFields>
            <Field $w={90} $gap={7}><T w={78} color="#f00">Disconnected</T></Field>
            <Field $w={47} $gap={6}><T w={31}>0 X 0</T></Field>
            <Field $w={93} $gap={6}><T w={63}>fps= 0.000</T></Field>
            <Field $w={140} $gap={6} />
            <Field $w={200} $gap={0} />
          </StatusFields>
          <Dock title="Motion Controller" w={110} pad={8} />
          <AxisGrid>
            {axes.map((a) => (
              <React.Fragment key={a}>
                <AxisCell $axis><T size={18} bold w={a.length > 1 ? 50 : undefined}>{a}</T></AxisCell>
                <AxisCell><T size={13.500} w={104}>Get Status Failed</T></AxisCell>
                <AxisCell $right><T size={15} bold w={96}>0.000000mm</T></AxisCell>
                <AxisCell $right><T size={15} bold w={110}>0.000000mm/s</T></AxisCell>
              </React.Fragment>
            ))}
          </AxisGrid>
          <StepRow>
            <Radio $on $gap={12} />
            <T w={60}>continues</T>
            <Radio $gap={12} />
            <T w={51}>0.01mm</T>
            <Radio $gap={20} />
            <T w={43}>0.1mm</T>
            <Radio $gap={29} />
            <T w={32}>1mm</T>
            <Radio $gap={39} />
            <StepInput />
            <T w={24}>mm</T>
          </StepRow>
          <JogGrid>
            {axes.map((a) => (
              <React.Fragment key={a}>
                <JogButton><JogArrow /><T size={18} w={a.length > 1 ? 56 : 15}>{a + "-"}</T></JogButton>
                <JogButton><JogArrow right /><T size={18} w={a.length > 1 ? 60 : 20}>{a + "+"}</T></JogButton>
                <JogInput />
              </React.Fragment>
            ))}
          </JogGrid>
        </Column>
      </Body>
    </Window>
  );
}
